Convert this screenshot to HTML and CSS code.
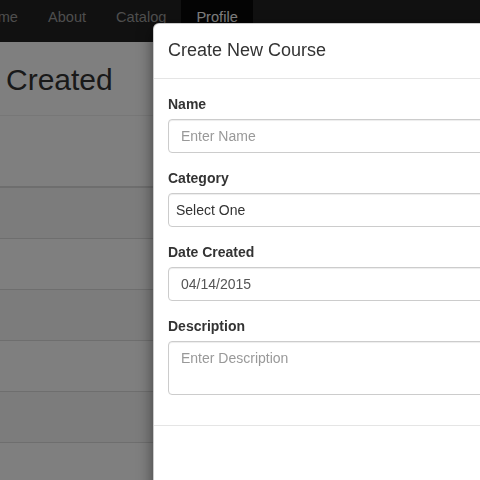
FILE: index.html
```html
<!DOCTYPE html>
<html lang="en">
<head>
<meta charset="utf-8">
<title>Create New Course</title>
<link rel="stylesheet" href="styles.css">
</head>
<body>
<nav class="navbar">
  <ul class="nav">
    <li><a href="#">Home</a></li>
    <li><a href="#">About</a></li>
    <li><a href="#">Catalog</a></li>
    <li class="active"><a href="#">Profile</a></li>
  </ul>
</nav>
<main class="page">
  <div class="page-header"><h1>Created</h1></div>
  <div class="thead"></div>
  <div class="row odd"></div>
  <div class="row"></div>
  <div class="row odd"></div>
  <div class="row"></div>
  <div class="row odd"></div>
</main>
<div class="backdrop"></div>
<div class="modal">
  <div class="modal-header"><h4 class="modal-title">Create New Course</h4></div>
  <form class="modal-body">
    <div class="form-group">
      <label>Name</label>
      <input class="form-control" type="text" placeholder="Enter Name">
    </div>
    <div class="form-group">
      <label>Category</label>
      <select class="form-control select"><option>Select One</option></select>
    </div>
    <div class="form-group">
      <label>Date Created</label>
      <input class="form-control" type="text" value="04/14/2015">
    </div>
    <div class="form-group">
      <label>Description</label>
      <textarea class="form-control textarea" placeholder="Enter Description"></textarea>
    </div>
  </form>
  <div class="modal-footer"></div>
</div>
</body>
</html>
```
FILE: styles.css
```css
* { box-sizing: border-box; }
html, body { margin: 0; padding: 0; }
body {
  width: 480px;
  height: 480px;
  overflow: hidden;
  background: #fff;
  font-family: "Liberation Sans", Arial, sans-serif;
  font-size: 14px;
  color: #333;
}
.navbar {
  height: 42px;
  background: #222;
  overflow: hidden;
}
.nav {
  list-style: none;
  margin: 0 0 0 -36px;
  padding: 0;
  display: flex;
  height: 42px;
}
.nav a {
  display: block;
  height: 42px;
  padding: 7px 15px 0;
  line-height: 20px;
  font-size: 14.6px;
  color: #9d9d9d;
  text-decoration: none;
}
.nav .active a {
  background: #080808;
  color: #fff;
}
.page-header {
  height: 74px;
  border-bottom: 1px solid #eee;
  padding: 0 0 0 6px;
}
.page-header h1 {
  margin: 0;
  padding-top: 21px;
  font-size: 30px;
  line-height: 33px;
  font-weight: normal;
  color: #333;
}
.thead {
  height: 72px;
  border-bottom: 2px solid #ddd;
}
.row {
  height: 51px;
  border-bottom: 1px solid #ddd;
}
.row.odd { background: #f9f9f9; }
.backdrop {
  position: fixed;
  inset: 0;
  background: rgba(0, 0, 0, 0.5);
}
.modal {
  position: absolute;
  left: 153px;
  top: 23px;
  width: 600px;
  height: 520px;
  background: #fff;
  border: 1px solid rgba(0, 0, 0, 0.2);
  border-right: 0;
  border-radius: 6px 0 0 6px;
  box-shadow: 0 5px 15px rgba(0, 0, 0, 0.5);
}
.modal-header {
  padding: 14px 14px 15px;
  border-bottom: 1px solid #e5e5e5;
}
.modal-title {
  margin: 0;
  font-size: 18px;
  line-height: 25px;
  font-weight: normal;
  color: #333;
}
.modal-body {
  padding: 15px 14px;
  margin: 0;
}
.form-group { margin-bottom: 15px; }
.form-group label {
  display: block;
  margin-bottom: 5px;
  font-weight: bold;
  font-size: 14px;
  line-height: 20px;
  color: #333;
}
.form-control {
  display: block;
  width: 100%;
  height: 34px;
  padding: 6px 12px;
  font-family: "Liberation Sans", Arial, sans-serif;
  font-size: 14px;
  line-height: 20px;
  color: #555;
  background: #fff;
  border: 1px solid #ccc;
  border-radius: 4px;
  box-shadow: inset 0 1px 1px rgba(0, 0, 0, 0.075);
  outline: none;
}
.form-control::placeholder { color: #999; }
.select {
  -webkit-appearance: none;
  appearance: none;
  padding-left: 7px;
  color: #333;
}
.textarea {
  height: 54px;
  resize: none;
}
.modal-footer {
  border-top: 1px solid #e5e5e5;
  height: 80px;
}
```
